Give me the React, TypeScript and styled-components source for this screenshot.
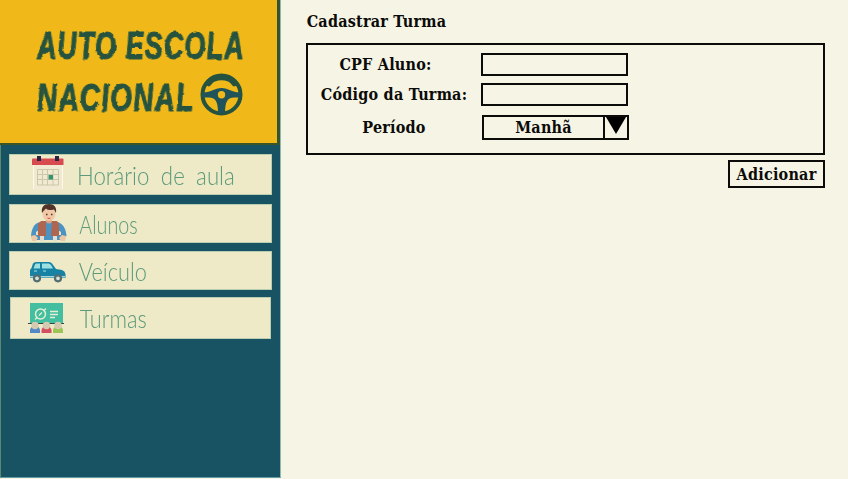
import React from "react";
import styled, { createGlobalStyle } from "styled-components";

const GlobalStyle = createGlobalStyle`
  *, *::before, *::after { box-sizing: border-box; }
  html, body { margin: 0; padding: 0; background: #f6f4e4; overflow: hidden; }
`;

const Page = styled.div`
  display: flex;
  width: 848px;
  height: 479px;
  background: #f6f4e4;
  overflow: hidden;
`;

const Sidebar = styled.aside`
  width: 281px;
  height: 478px;
  flex: none;
  background: #185364;
  border-left: 1px solid #5a8873;
  border-right: 1px solid #94b8ae;
  border-bottom: 1px solid #639ea7;
`;

const Brand = styled.header`
  width: 280px;
  height: 145px;
  margin-left: -1px;
  padding: 23px 0 0 37px;
  background: #f0b919;
  border-right: 3px solid #34552f;
  border-bottom: 2px solid #3b5525;
  color: #26533f;
`;

const BrandLine = styled.div<{ $scale: number }>`
  width: max-content;
  height: 52px;
  font: italic 700 38px/46px "Liberation Sans Narrow", "Liberation Sans", sans-serif;
  letter-spacing: 1.5px;
  white-space: nowrap;
  -webkit-text-stroke: 1.1px #26533f;
  filter: url(#brush);
  transform: scaleX(${(p) => p.$scale}) skewX(4deg);
  transform-origin: 0 50%;
`;

const BrandRow = styled.div`
  display: grid;
  grid-template-columns: 163px 43px;
`;

const BrushDefs = styled.svg`
  display: block;
  width: 0;
  height: 0;
`;

const WheelIcon = styled.svg`
  width: 43px;
  height: 43px;
  margin-top: -2px;
`;

const Menu = styled.nav`
  padding: 9px 8px 0;
`;

const MenuItem = styled.a<{ $h: number; $gap: number; $inset?: boolean }>`
  display: grid;
  grid-template-columns: 67px 1fr;
  height: ${(p) => p.$h}px;
  margin: 0 ${(p) => (p.$inset ? 1 : 0)}px ${(p) => p.$gap}px ${(p) => (p.$inset ? 1 : 0)}px;
  background: #eee9c6;
  border: 1px solid #b9cdb0;
`;

const ItemIcon = styled.svg`
  width: 67px;
  height: 100%;
  overflow: visible;
`;

const ItemLabel = styled.span<{ $scale: number; $x: number; $y: number }>`
  width: max-content;
  padding: ${(p) => p.$y}px 0 0 ${(p) => p.$x}px;
  font: 300 25px/30px Lato, sans-serif;
  word-spacing: 6px;
  white-space: nowrap;
  color: #5b9a7b;
  transform: scaleX(${(p) => p.$scale});
  transform-origin: 0 50%;
`;

const Main = styled.main`
  padding: 12px 0 0 25px;
  width: 544px;
`;

const Caption = styled.span`
  display: block;
  width: max-content;
  font: 700 16px/20px "DejaVu Serif Condensed", "DejaVu Serif", serif;
  font-stretch: condensed;
  letter-spacing: 0.22px;
  white-space: nowrap;
  color: #0b0b0a;
`;

const Title = styled.h1`
  display: flex;
  justify-content: center;
  margin: 0;
  width: 141px;
  height: 31px;
`;

const Panel = styled.form`
  width: 519px;
  height: 112px;
  border: 2px solid #0b0b0a;
  padding: 8px 0 0 10px;
`;

const Field = styled.div<{ $h: number }>`
  display: grid;
  grid-template-columns: 152px 149px;
  column-gap: 11px;
  height: ${(p) => p.$h}px;
`;

const LabelCell = styled.label<{ $shift: number; $top?: number }>`
  display: flex;
  justify-content: center;
  width: 152px;
  padding: ${(p) => p.$top ?? 2}px ${(p) => p.$shift}px 0 0;
`;

const Input = styled.input`
  width: 147px;
  height: 23px;
  margin: 0;
  padding: 0 6px;
  border: 2px solid #0b0b0a;
  border-radius: 0;
  background: transparent;
  outline: none;
`;

const Select = styled.div`
  display: grid;
  grid-template-columns: 119px 24px;
  width: 147px;
  height: 25px;
  margin-left: 1px;
  border: 2px solid #0b0b0a;
`;

const SelectValue = styled.div`
  display: flex;
  justify-content: center;
  padding-top: 1px;
`;

const Arrow = styled.svg`
  width: 24px;
  height: 21px;
  border-left: 2px solid #0b0b0a;
`;

const AddButton = styled.button`
  display: flex;
  align-items: center;
  justify-content: center;
  width: 97px;
  height: 28px;
  margin: 5px 0 0 422px;
  padding: 2px 0 0;
  border: 2px solid #0b0b0a;
  background: transparent;
`;

function BrushFilter() {
  return (
    <BrushDefs aria-hidden="true">
      <filter id="brush" x="-5%" y="-5%" width="110%" height="110%">
        <feTurbulence type="fractalNoise" baseFrequency="0.13" numOctaves={3} seed={4} result="noise" />
        <feDisplacementMap in="SourceGraphic" in2="noise" scale={3.2} xChannelSelector="R" yChannelSelector="G" />
      </filter>
    </BrushDefs>
  );
}

function Wheel() {
  return (
    <WheelIcon viewBox="0 0 43 43">
      <circle cx="21.5" cy="21.5" r="19" fill="none" stroke="#26533f" strokeWidth="4" />
      <path d="M5 12C12 1 31 1 38 12L34 13.500C31 12 31 9.500 28 8.500Q21.500 6 15 8.500C12 9.500 12 12 9 13.500Z" fill="#26533f" />
      <path
        fillRule="evenodd"
        d="M2 19.500C11 20 14 15 21.500 15S32 20 41 19.500V24.500H34C28 24.500 25 28 25 40H18C18 28 15 24.500 9 24.500H2ZM21.500 18a3.700 3.700 0 1 0 0 7.400a3.700 3.700 0 1 0 0-7.400Z"
        fill="#20545a"
      />
    </WheelIcon>
  );
}

function CalendarIcon() {
  return (
    <ItemIcon viewBox="10 155 67 39">
      <path d="M33 164H63V190H33Z" fill="#f2e9d2" />
      <path d="M33.500 164V189M62.500 164V189" stroke="#fff8e9" />
      <path d="M32 159.500q0-1 1-1H62.500q1 0 1 1V165H32Z" fill="#d74b50" />
      <path d="M37 156h4v5h-4zM55 156h4v5h-4z" fill="#2c2442" />
      <path d="M37.500 169.500H58.500V185H37.500ZM37.500 174.500H58.500M37.500 179.500H58.500M42.500 169.500V185M47.500 169.500V185M53 169.500V185" fill="none" stroke="#c9c9aa" />
      <path d="M48.500 175h4.500v4.500h-4.500z" fill="#37926f" />
    </ItemIcon>
  );
}

function StudentIcon() {
  return (
    <ItemIcon viewBox="10 205 67 37">
      <path d="M40 222C34 223 31 230 31 237L35 240H62L66.500 236C66 229 63 223 57 222Z" fill="#4a93c3" />
      <path d="M36 232L39 230V235H36ZM61 232L58 230V235H61Z" fill="#e8e2c3" />
      <path d="M31 236l4-1 3 3-2 3h-4zM66 236l-4-1-3 3 2 3h4z" fill="#edc7a4" />
      <path d="M41 221L46 221V236H38V224ZM52 221L57 221L59 224V236H51Z" fill="#ae6650" />
      <path d="M46 217h6v5q-3 3-6 0z" fill="#dfa47f" />
      <path d="M40 236h4v5h-4zM53 236h4v5h-4z" fill="#e4ddd0" />
      <ellipse cx="49" cy="214" rx="6.500" ry="7" fill="#f2c8a6" />
      <path d="M42 213C41 207 44 204 49 204S57 207 56 213L54 209.500Q48 211 46 208.500L43.500 211Z" fill="#503429" />
      <path d="M46 214.500h1.500M51 214.500h1.500" stroke="#49362e" strokeWidth="1.300" />
      <path d="M47.500 218q1.500 1.200 3 0" fill="none" stroke="#c7574d" />
    </ItemIcon>
  );
}

function CarIcon() {
  return (
    <ItemIcon viewBox="10 252 67 37">
      <path d="M30 278V270L31.500 268L33 263.500Q34 262 36 262H49Q51 262 52 263.500L56 269L62 270Q65 271 65.500 274V278Z" fill="#1683a5" />
      <path d="M33.500 268.500L35 264.500Q35.500 263.500 36.500 263.500H40V268.500H33.500ZM42 263.500H48.500Q50 263.500 51 265L53 268.500H42Z" fill="#9ce0e1" />
      <path d="M30 276.800H65" stroke="#a9d3d6" strokeWidth="1.600" />
      <path d="M43 271h3M34 271h3" stroke="#b8e1df" />
      <g fill="#d7e1d5" stroke="#536d71" strokeWidth="2.200"><circle cx="37" cy="278.300" r="3" /><circle cx="58" cy="278.300" r="3" /></g>
    </ItemIcon>
  );
}

function ClassIcon() {
  return (
    <ItemIcon viewBox="11 298 67 40">
      <path d="M30 303H63V323H30Z" fill="#43bea0" />
      <path d="M28 323.500H64" stroke="#304b43" strokeWidth="1.200" />
      <circle cx="40.500" cy="314" r="5" fill="none" stroke="#e3f0d3" strokeWidth="1.500" />
      <path d="M35 319.500L37.500 317M43.500 311L46 308.500M39 315.500l3-3M50 311.500h8M50 314.500h8M50 317.500h5" stroke="#e3f0d3" strokeWidth="1.300" />
      <path d="M30 333v-3q1-4 5-4t5 4v3z" fill="#5389c7" />
      <path d="M41.500 333v-3q1-4 5-4t5 4v3z" fill="#d64f60" />
      <path d="M53 333v-3q1-4 5-4t5 4v3z" fill="#9bc554" />
      <g fill="#d5c9b2"><circle cx="35" cy="325.500" r="3.700" /><circle cx="46.500" cy="325.500" r="3.700" /><circle cx="58" cy="325.500" r="3.700" /></g>
    </ItemIcon>
  );
}

export default function App() {
  return (
    <>
      <GlobalStyle />
      <Page>
        <Sidebar>
          <Brand>
            <BrushFilter />
            <BrandLine $scale={0.71}>AUTO ESCOLA</BrandLine>
            <BrandRow>
              <BrandLine $scale={0.74}>NACIONAL</BrandLine>
              <Wheel />
            </BrandRow>
          </Brand>
          <Menu>
            <MenuItem $h={41} $gap={9}>
              <CalendarIcon />
              <ItemLabel $x={0} $y={5} $scale={0.89}>Horário de aula</ItemLabel>
            </MenuItem>
            <MenuItem $h={39} $gap={8}>
              <StudentIcon />
              <ItemLabel $x={3} $y={4} $scale={0.79}>Alunos</ItemLabel>
            </MenuItem>
            <MenuItem $h={39} $gap={7}>
              <CarIcon />
              <ItemLabel $x={2} $y={4} $scale={0.87}>Veículo</ItemLabel>
            </MenuItem>
            <MenuItem $h={42} $gap={0} $inset>
              <ClassIcon />
              <ItemLabel $x={2} $y={5} $scale={0.87}>Turmas</ItemLabel>
            </MenuItem>
          </Menu>
        </Sidebar>
        <Main>
          <Title><Caption>Cadastrar Turma</Caption></Title>
          <Panel>
            <Field $h={30}>
              <LabelCell $shift={17}><Caption>CPF Aluno:</Caption></LabelCell>
              <Input aria-label="CPF Aluno" />
            </Field>
            <Field $h={32}>
              <LabelCell $shift={0}><Caption>Código da Turma:</Caption></LabelCell>
              <Input aria-label="Código da Turma" />
            </Field>
            <Field $h={25}>
              <LabelCell $shift={0} $top={3}><Caption>Período</Caption></LabelCell>
              <Select>
                <SelectValue><Caption>Manhã</Caption></SelectValue>
                <Arrow viewBox="0 0 22 21"><path d="M1 0H21L11 17Z" fill="#000" /></Arrow>
              </Select>
            </Field>
          </Panel>
          <AddButton type="button"><Caption>Adicionar</Caption></AddButton>
        </Main>
      </Page>
    </>
  );
}
